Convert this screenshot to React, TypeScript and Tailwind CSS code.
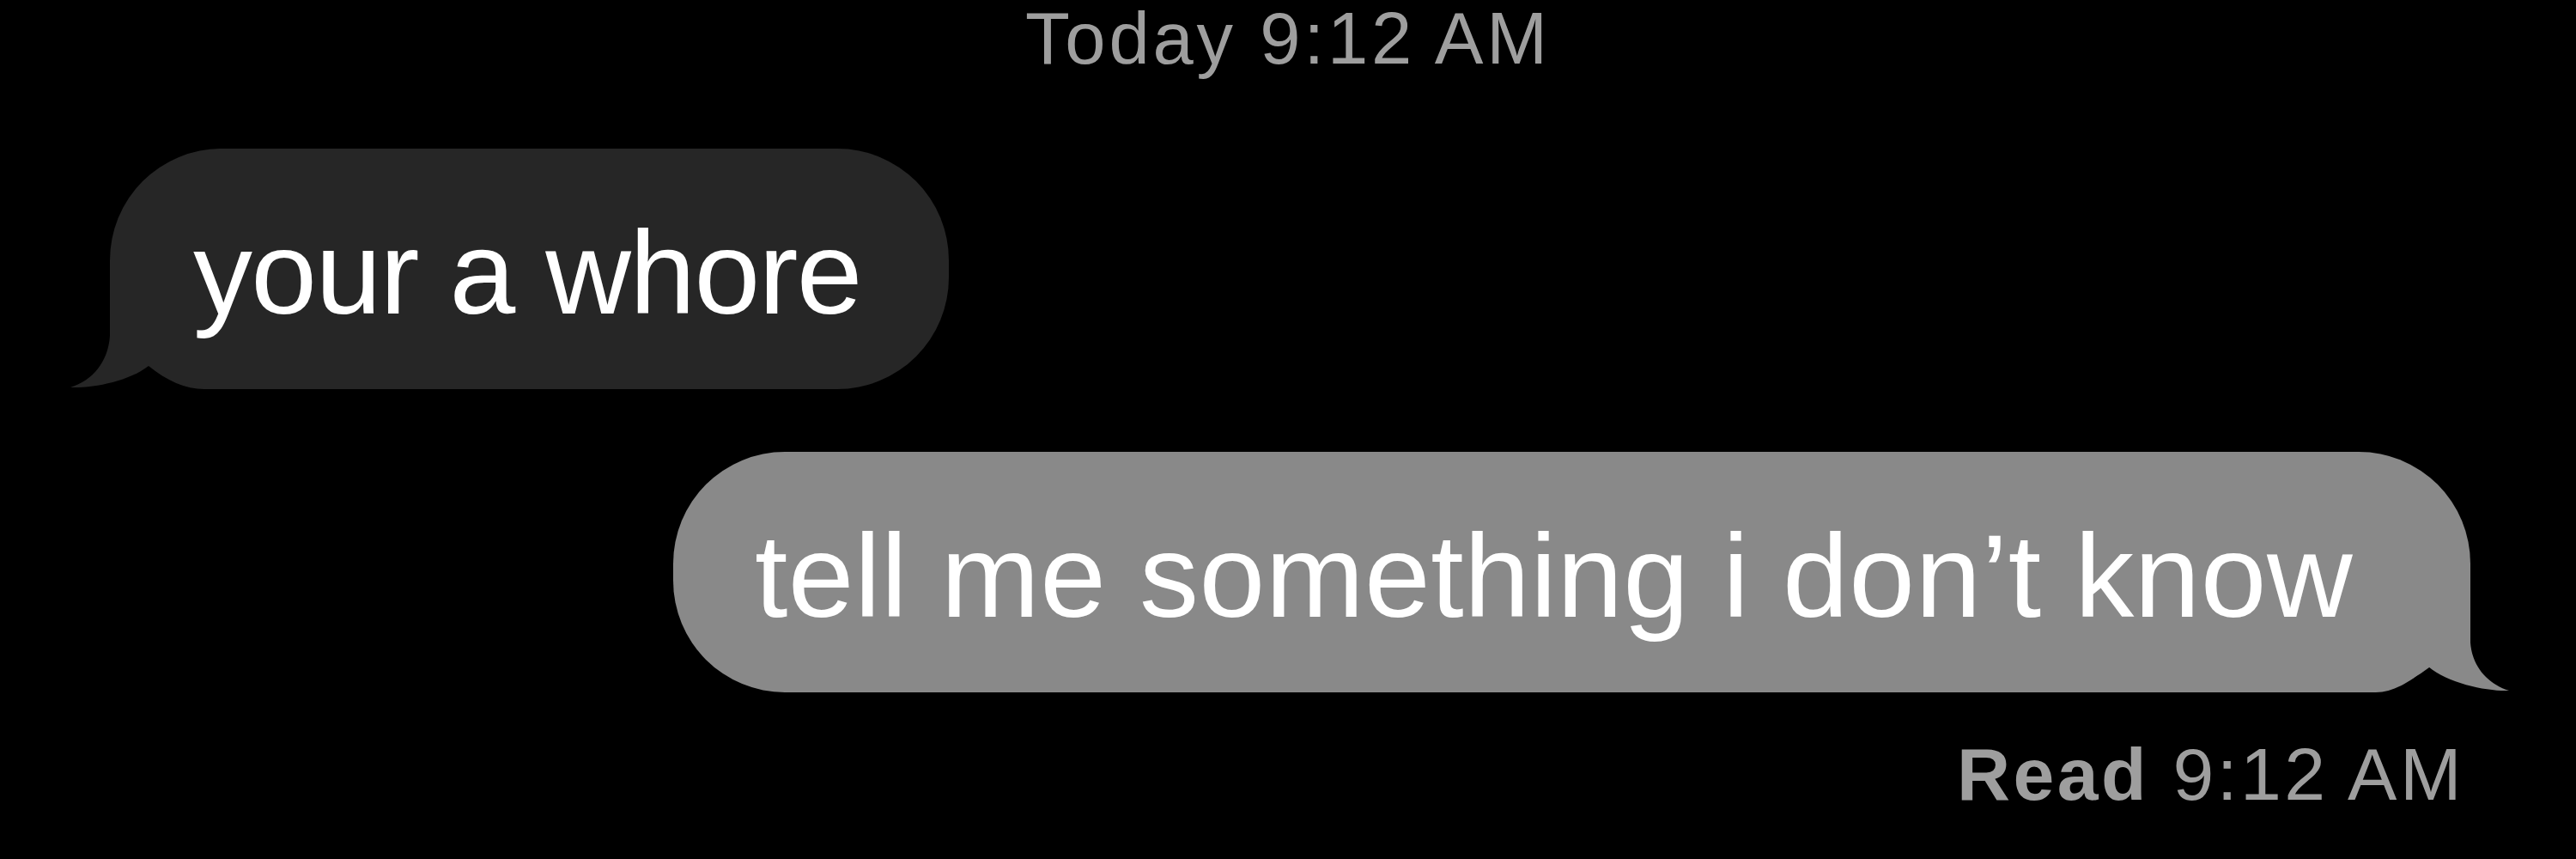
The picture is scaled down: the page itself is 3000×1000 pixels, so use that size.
import React from "react";

const TAIL_RIGHT =
  "M -140 -150 L 0 -150 L 0 -58 C 2 -30 20 -10 45 -2 C 20 -1 -25 -10 -49 -30 C -70 -12 -90 0 -110 0 L -140 0 Z";
const TAIL_LEFT =
  "M 140 -150 L 0 -150 L 0 -62 C -2 -32 -20 -10 -46 -2 C -20 -1 22 -9 45 -27 C 66 -10 88 0 110 0 L 140 0 Z";

interface BubbleProps {
  text: string;
  side: "in" | "out";
}

const Bubble: React.FC<BubbleProps> = ({ text, side }) => {
  const incoming = side === "in";

  return (
    <div
      className={`relative rounded-[130px] pt-[74px] pb-[66px] text-[138px] leading-[140px] text-white whitespace-nowrap ${
        incoming
          ? "bg-[#262626] pl-[97px] pr-[102px] tracking-[-0.012em]"
          : "bg-[#898989] pl-[95px] pr-[137px] tracking-[0.003em]"
      }`}
    >
      {incoming ? (
        <svg
          className="absolute left-[-50px] bottom-0"
          width="190"
          height="150"
          viewBox="-50 -150 190 150"
        >
          <path d={TAIL_LEFT} fill="#262626" />
        </svg>
      ) : (
        <svg
          className="absolute right-[-50px] bottom-0"
          width="190"
          height="150"
          viewBox="-140 -150 190 150"
        >
          <path d={TAIL_RIGHT} fill="#898989" />
        </svg>
      )}
      <span className="relative">{text}</span>
    </div>
  );
};

export default function App() {
  return (
    <div
      className="w-[3000px] h-[1000px] bg-black flex flex-col overflow-hidden"
      style={{ fontFamily: '"Liberation Sans", Arial, sans-serif' }}
    >
      {/* timestamp */}
      <div className="pt-[2px] text-center text-[85px] leading-[85px] tracking-[0.045em] text-[#9e9e9e]">
        Today 9:12 AM
      </div>

      <div className="mt-[86px] self-start ml-[128px]">
        <Bubble side="in" text="your a whore" />
      </div>

      <div className="mt-[73px] self-end mr-[123px]">
        <Bubble side="out" text="tell me something i don’t know" />
      </div>

      <div className="mt-[52px] self-end mr-[130px] text-[86px] leading-[86px] tracking-[0.04em] text-[#9e9e9e]">
        <span className="font-semibold">Read</span> 9:12 AM
      </div>
    </div>
  );
}
